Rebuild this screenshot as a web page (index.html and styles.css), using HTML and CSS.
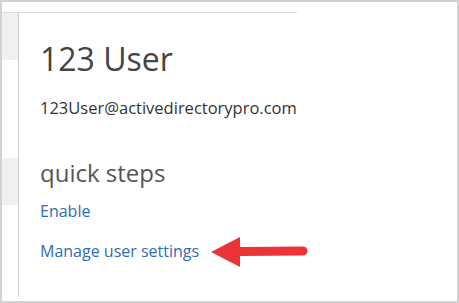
FILE: index.html
```html
<!DOCTYPE html>
<html lang="en">
<head>
  <meta charset="UTF-8">
  <meta name="viewport" content="width=device-width, initial-scale=1.0">
  <title>123 User</title>
  <link rel="stylesheet" href="styles.css">
</head>
<body>
  <div class="frame">
    <div class="layout">
      <!-- Barra lateral -->
      <div class="rail">
        <div class="rail-block top"></div>
        <div class="rail-gap"></div>
        <div class="rail-block mid"></div>
      </div>

      <!-- Panel de usuario -->
      <div class="panel">
        <h1 class="user-name">123 User</h1>
        <div class="user-mail">123User@activedirectorypro.com</div>

        <h2 class="section-title">quick steps</h2>
        <a class="step-link" href="#">Enable</a>
        <div class="step-row">
          <a class="step-link" href="#">Manage user settings</a>
          <svg class="arrow" width="97" height="32" viewBox="0 0 97 32">
            <path d="M0 17 L29 2 L29 12 L92 11.5 A4.5 4.5 0 0 1 92 20.5 L29 21 L29 32 Z" fill="#ea3438" />
          </svg>
        </div>
      </div>
    </div>
  </div>
</body>
</html>
```

FILE: styles.css
```css
* {
  margin: 0;
  padding: 0;
  box-sizing: border-box;
}

body {
  font-family: 'Open Sans', 'Noto Sans', sans-serif;
  background-color: #ffffff;
  width: 459px;
  height: 303px;
  overflow: hidden;
}

.frame {
  width: 459px;
  height: 303px;
  border: 2px solid #d2d2d2;
  padding-top: 10px;
  background-color: #ffffff;
}

.layout {
  display: flex;
  height: 285px;
}

/* Barra lateral */
.rail {
  width: 16px;
  display: flex;
  flex-direction: column;
  border-top: 1px solid #dcdcdc;
}

.rail-block {
  background-color: #eff0f0;
}

.rail-block.top {
  height: 47px;
}

.rail-gap {
  height: 98px;
}

.rail-block.mid {
  height: 47px;
}

/* Panel */
.panel {
  width: 279px;
  border-left: 1px solid #cfcfcf;
  border-top: 1px solid #dcdcdc;
  padding-left: 21px;
  white-space: nowrap;
  display: flex;
  flex-direction: column;
  align-items: flex-start;
}

.user-name {
  font-size: 32px;
  font-weight: 400;
  color: #444444;
  line-height: 40px;
  margin-top: 26px;
}

.user-mail {
  font-size: 16.5px;
  color: #333333;
  line-height: 20px;
  margin-top: 19px;
  width: 100%;
  overflow: hidden;
}

.section-title {
  font-size: 24px;
  font-weight: 400;
  color: #555555;
  line-height: 30px;
  margin-top: 40px;
}

.step-link {
  font-size: 16px;
  color: #2f6db0;
  text-decoration: none;
  line-height: 20px;
}

.section-title + .step-link {
  margin-top: 13px;
}

.step-row {
  display: flex;
  align-items: center;
  margin-top: 14px;
}

.arrow {
  margin-left: 12px;
  flex-shrink: 0;
}
```
